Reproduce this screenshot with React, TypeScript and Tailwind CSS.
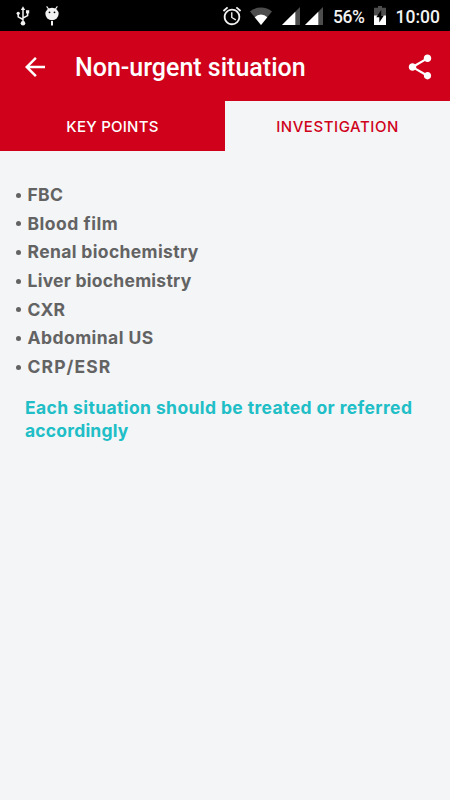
import { ReactNode } from 'react';
import clsx from 'clsx';

interface IconProps {
  className?: string;
}

const IconUsb = ({ className }: IconProps) => (
  <svg viewBox="0 0 14 20" className={className} fill="none" stroke="#f2f2f2" strokeWidth="1.5">
    <path d="M7 3v13M7 13.5 2.2 10.8V8M7 12l4.6-2.4V6.5" />
    <path d="M7 .2 9.2 4H4.8z" fill="#f2f2f2" stroke="none" />
    <circle cx="2.2" cy="7.3" r="1.6" fill="#f2f2f2" stroke="none" />
    <path d="M10 4.2h3.2v3.2H10z" fill="#f2f2f2" stroke="none" />
    <circle cx="7" cy="17.2" r="2.3" fill="#f2f2f2" stroke="none" />
  </svg>
);

const IconDebug = ({ className }: IconProps) => (
  <svg viewBox="0 0 14 20" className={className} fill="#f2f2f2">
    <path d="M1.6.4 4 3.6M12.4.4 10 3.6" stroke="#f2f2f2" strokeWidth="1.1" />
    <ellipse cx="7" cy="8" rx="6.6" ry="6.2" />
    <path d="M6 15h2v4.6H6z" />
    <circle cx="4.5" cy="6.3" r=".9" fill="#000" />
    <circle cx="9.5" cy="6.3" r=".9" fill="#000" />
  </svg>
);

const IconAlarm = ({ className }: IconProps) => (
  <svg viewBox="0 0 24 24" className={className} fill="#f2f2f2">
    <path d="M22 5.72l-4.6-3.86-1.29 1.53 4.6 3.86L22 5.72zM7.88 3.39L6.6 1.86 2 5.71l1.29 1.53 4.59-3.85zM12.5 8H11v6l4.75 2.85.75-1.23-4-2.37V8zM12 4c-4.97 0-9 4.03-9 9s4.02 9 9 9a9 9 0 0 0 0-18zm0 16c-3.87 0-7-3.13-7-7s3.13-7 7-7 7 3.13 7 7-3.13 7-7 7z" />
  </svg>
);

const IconWifi = ({ className }: IconProps) => (
  <svg viewBox="0 0 22 18" className={className}>
    <path d="M11 18 0 4.4Q4.6.6 11 .6T22 4.4z" fill="#4d4d4d" />
    <path d="M11 18 4.7 10.2Q7.4 7.6 11 7.6t6.3 2.6z" fill="#fff" />
  </svg>
);

const IconSignal = ({ className }: IconProps) => (
  <svg viewBox="0 0 18 18" className={className}>
    <path d="M18 0v18H0z" fill="#4d4d4d" />
    <path d="M13.3 4.7V18H0z" fill="#fff" />
  </svg>
);

const IconBattery = ({ className }: IconProps) => (
  <svg viewBox="0 0 12 19" className={className}>
    <path d="M4 0h4v1.8h4V10H0V1.8h4z" fill="#4d4d4d" />
    <path d="M0 9.5h12V19H0z" fill="#fff" />
    <path d="M7.2 4 2.3 11.3h3v5.2l4.6-7H7.2z" fill="#000" />
  </svg>
);

const IconBack = ({ className }: IconProps) => (
  <svg viewBox="0 0 24 24" className={className} fill="#fff">
    <path d="M20 11H7.83l5.59-5.59L12 4l-8 8 8 8 1.41-1.41L7.83 13H20v-2z" />
  </svg>
);

const IconShare = ({ className }: IconProps) => (
  <svg viewBox="0 0 24 24" className={className} fill="#fff">
    <path d="M18 16.08c-.76 0-1.44.3-1.96.77L8.91 12.7c.05-.23.09-.46.09-.7s-.04-.47-.09-.7l7.05-4.11c.54.5 1.25.81 2.04.81 1.66 0 3-1.34 3-3s-1.34-3-3-3-3 1.34-3 3c0 .24.04.47.09.7L8.04 9.81C7.5 9.31 6.79 9 6 9c-1.66 0-3 1.34-3 3s1.34 3 3 3c.79 0 1.5-.31 2.04-.81l7.12 4.16c-.05.21-.08.43-.08.65 0 1.61 1.31 2.92 2.92 2.92s2.92-1.31 2.92-2.92-1.31-2.92-2.92-2.92z" />
  </svg>
);

const StatusBar = () => (
  <div className="flex h-[31px] items-center bg-black font-['Roboto',sans-serif] text-[17.5px] font-medium text-[#f2f2f2]">
    <IconUsb className="ml-4 h-5 w-3.5" />
    <IconDebug className="ml-[15px] h-5 w-3.5" />
    <IconAlarm className="ml-[162px] size-[22px]" />
    <IconWifi className="ml-[6.5px] h-[18px] w-[22px]" />
    <IconSignal className="ml-[10.5px] size-[18px]" />
    <IconSignal className="ml-[5px] size-[18px]" />
    <span className="ml-2.5 w-[33px] whitespace-nowrap pt-[3px] tracking-[-0.4px]">56%</span>
    <IconBattery className="ml-2 h-[19px] w-3" />
    <span className="ml-[9.5px] whitespace-nowrap pt-[3px]">10:00</span>
  </div>
);

interface TabProps {
  active?: boolean;
  children: ReactNode;
}

const Tab = ({ active, children }: TabProps) => (
  <button
    className={clsx(
      'flex flex-1 items-center justify-center pt-0.5 text-[15px]',
      active ? 'bg-[#f3f5f7] text-[#d0021b]' : 'bg-[#d0021b] text-white',
    )}
  >
    {children}
  </button>
);

const items = [
  { label: 'FBC', className: 'tracking-[0.3px]' },
  { label: 'Blood film', className: 'tracking-[0.52px]' },
  { label: 'Renal biochemistry', className: 'tracking-[0.36px]' },
  { label: 'Liver biochemistry', className: 'tracking-[0.25px]' },
  { label: 'CXR', className: 'tracking-[0.2px]' },
  { label: 'Abdominal US', className: 'tracking-[0.45px]' },
  { label: 'CRP/ESR', className: 'tracking-[1.1px]' },
];

export default function App() {
  return (
    <div className="flex h-[800px] w-[450px] flex-col overflow-hidden bg-[#f3f5f7] font-['Inter',sans-serif]">
      <StatusBar />
      <header className="flex h-[70px] items-center bg-[#d0021b] pt-px">
        <IconBack className="ml-5 size-[30px]" />
        <h1 className="ml-[25px] pt-[2px] font-['Roboto',sans-serif] text-[25px] font-medium whitespace-nowrap text-white">
          Non-urgent situation
        </h1>
        <IconShare className="mr-[15px] ml-auto size-[30px]" />
      </header>
      <nav className="flex h-[50.4px] font-medium">
        <Tab>
          <span className="tracking-[0.25px]">KEY POINTS</span>
        </Tab>
        <Tab active>
          <span className="tracking-[0.55px]">INVESTIGATION</span>
        </Tab>
      </nav>
      <main className="pt-[29.4px]">
        <ul className="text-[17.5px] font-bold text-[#636363]">
          {items.map(({ label, className }) => (
            <li key={label} className="flex h-[28.7px] items-center pl-4">
              <span className="mr-[6.5px] size-[5px] rounded-full bg-[#636363]" />
              <span className={clsx('whitespace-nowrap', className)}>{label}</span>
            </li>
          ))}
        </ul>
        <p className="mt-[15.5px] pl-[25px] text-[17.5px] leading-[22.5px] font-bold whitespace-nowrap text-[#20bec6]">
          <span className="block tracking-[0.39px]">
            Each situation should be treated or referred
          </span>
          <span className="block tracking-[0.2px]">accordingly</span>
        </p>
      </main>
    </div>
  );
}
